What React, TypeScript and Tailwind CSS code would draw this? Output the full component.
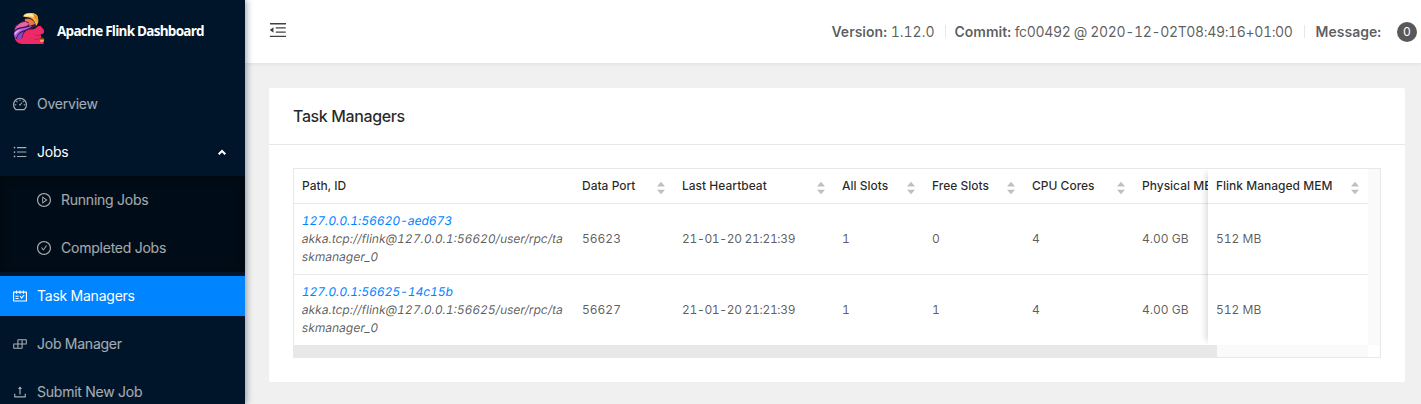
import type { ReactNode } from "react";
import type { IconType } from "react-icons";
import {
  AiOutlineBars,
  AiOutlineBuild,
  AiOutlineCheckCircle,
  AiOutlineDashboard,
  AiOutlineMenuFold,
  AiOutlinePlayCircle,
  AiOutlineSchedule,
  AiOutlineUpload,
} from "react-icons/ai";

const ICON_BOX = "64 64 896 896";

function Squirrel() {
  return (
    <svg viewBox="0 0 32 34" className="h-[34px] w-8 shrink-0">
      {/* tail */}
      <path d="M1 20C0 16 2 12 7 11L12 7C15 6 20 7 23 9L24 14L14 20L6 29C3 27 1 24 1 20Z" fill="#3b1747" />
      <path d="M10 4.500C11 1.500 15 .500 18 1C22 .500 25 3 25 6C26 9 25 12 23 14C22.500 10 20 6.500 16 5.500C14 5 12 5 10 4.500Z" fill="#f6b13c" />
      <path d="M10.500 4C12 1.500 16 1 19 2C20.500 2.500 21 4 20.500 5.500C17 3.500 14 5.500 10.500 4Z" fill="#fbe9a0" />
      <path d="M21 2.500C24.500 4 25.500 8 24.500 10.500C24 8 22.500 6 21 5Z" fill="#ef8a25" />
      <path d="M12 7C17 6 21 8 22 12C20 13 18 13 16 14C17 11 15 9 12 9.500Z" fill="#f0743f" />
      <path d="M5 13C8 9.500 13 9 16 11.500C15.500 14 12 14.500 9.500 15C7 15 3.500 16 2 18C2 16 3 14 5 13Z" fill="#ea62a6" />
      <path d="M.800 22C2 17.500 7 16.500 11 16C14 15.500 17 14.500 19.500 13.500C17 16.500 12.500 17.500 9 19C6 20.500 4 22.500 3 26C1.500 25 .800 23.500 .800 22Z" fill="#b05be0" />
      <path d="M1.500 21C3 18.500 6.500 17.500 9 17.500C6.500 18.500 4 20 2.200 23Z" fill="#d7b4f5" />
      <path d="M4 26.500C4.500 22.500 8 20.500 11 19.500C9.500 21.500 9 24 8.500 27C7 28 5 28 4 26.500Z" fill="#8a45cf" />
      {/* body */}
      <path
        d="M1.500 25C4 28 8 28 9.500 25.500C10 21 13 18 17 17.500C20 17.500 22 17 23.500 15.500C24.500 14.500 25.500 14 26 14L28 14L28.700 15.500C30.500 16.500 31.500 18.500 31 20.500C30 22 28.500 22 27.500 22.500C28.500 24 28 26 27.500 28C28 30 31 29.500 31 31.500C30.500 32 29 32 27 32L9.500 32C5 32 2 29 1.500 25Z"
        fill="#ee2a66"
      />
      <path d="M21.500 22.500C24 24 26 23.500 28 22.500M21 27C23.500 28 25 27.500 26.500 26.500" fill="none" stroke="#b3174f" strokeWidth="0.7" />
      {/* acorn */}
      <circle cx="29" cy="28" r="2.200" fill="#f4a440" />
      <path d="M26.500 27.500C27 24.800 31 24.800 31.400 27.500Z" fill="#7d3a1e" />
    </svg>
  );
}

function MenuItem({
  icon: Icon,
  label,
  sub,
  tone = "text-white/65",
  iconTone = "",
  children,
}: {
  icon: IconType;
  label: string;
  sub?: boolean;
  tone?: string;
  iconTone?: string;
  children?: ReactNode;
}) {
  return (
    <div className={`flex h-10 shrink-0 items-center gap-[10px] text-sm ${sub ? "pl-[37px]" : "pl-[13px]"} ${tone}`}>
      <Icon viewBox={ICON_BOX} className={`size-[14px] ${iconTone}`} />
      <span className="tracking-[-0.23px]">{label}</span>
      {children}
    </div>
  );
}

function Sorter() {
  return (
    <svg viewBox="0 0 8 14" className="mt-1 h-[14px] w-2 shrink-0 fill-[#bfbfbf]">
      <path d="M4 .800L8 5.500H0Z" />
      <path d="M4 13.200L0 8.700H8Z" />
    </svg>
  );
}

function Head({ label, sortable = true }: { label: string; sortable?: boolean }) {
  return (
    <div className="flex items-center justify-between overflow-hidden pr-[9px] pl-2 font-medium whitespace-nowrap text-black/85">
      <span>{label}</span>
      {sortable && <Sorter />}
    </div>
  );
}

const columns = "grid grid-cols-[280px_100px_160px_90px_100px_110px_74px]";

const rows = [
  { id: "127.0.0.1:56620-aed673", path: ["akka.tcp://flink@127.0.0.1:56620/user/rpc/ta", "skmanager_0"], port: "56623", free: "0" },
  { id: "127.0.0.1:56625-14c15b", path: ["akka.tcp://flink@127.0.0.1:56625/user/rpc/ta", "skmanager_0"], port: "56627", free: "1" },
];

export default function App() {
  return (
    <div className="flex h-[404px] w-full overflow-hidden bg-[#f0f0f0] font-['Inter',sans-serif] tabular-nums">
      <aside className="relative z-20 flex w-[245px] shrink-0 flex-col bg-[#001529] shadow-[2px_0_6px_rgba(0,21,41,0.35)]">
        <div className="flex h-16 shrink-0 items-center gap-3 pl-[13px]">
          <div className="-mt-[6px]">
            <Squirrel />
          </div>
          <h1 className="-mt-0.5 font-['Open_Sans',sans-serif] text-[13.5px] font-bold tracking-[-0.74px] whitespace-nowrap text-white">
            Apache Flink Dashboard
          </h1>
        </div>
        <nav className="flex flex-col pt-5">
          <MenuItem icon={AiOutlineDashboard} label="Overview" />
          <div className="h-2" />
          <MenuItem icon={AiOutlineBars} iconTone="text-white/65" label="Jobs" tone="text-white">
            <svg viewBox="0 0 10 7" className="mr-[18px] ml-auto h-[7px] w-[10px]">
              <path d="M1.700 5.300L5 2L8.300 5.300" fill="none" stroke="white" strokeWidth="2" />
            </svg>
          </MenuItem>
          <div className="mt-1 mb-1 flex flex-col gap-2 bg-[#000c17] py-1 shadow-[inset_0_2px_8px_rgba(0,0,0,0.45)]">
            <MenuItem sub icon={AiOutlinePlayCircle} label="Running Jobs" />
            <MenuItem sub icon={AiOutlineCheckCircle} label="Completed Jobs" />
          </div>
          <div className="flex flex-col gap-2">
            <MenuItem icon={AiOutlineSchedule} label="Task Managers" tone="bg-[#0084ff] text-white" />
            <MenuItem icon={AiOutlineBuild} label="Job Manager" />
            <MenuItem icon={AiOutlineUpload} label="Submit New Job" />
          </div>
        </nav>
      </aside>

      <main className="flex min-w-0 flex-1 flex-col">
        <header className="flex h-[63px] shrink-0 items-center bg-white pr-1 pl-6 text-sm whitespace-nowrap text-black/65 shadow-[0_1px_4px_rgba(0,21,41,0.08)]">
          <AiOutlineMenuFold viewBox={ICON_BOX} className="-mt-[3px] size-[18px] text-black/75" />
          <div className="ml-auto flex items-center">
            <span>
              <strong className="font-semibold">Version:</strong> 1.12.0
            </span>
            <i className="mr-2 ml-[11px] h-[13px] w-px bg-[#e8e8e8]" />
            <span>
              <strong className="font-semibold">Commit:</strong>{" "}
              <span className="tracking-[-0.35px]">fc00492 @ 2020-12-02T08:49:16+01:00</span>
            </span>
            <i className="mx-[11px] h-[13px] w-px bg-[#e8e8e8]" />
            <strong className="font-semibold">Message:</strong>
            <span className="ml-4 flex size-5 items-center justify-center rounded-full bg-[#595959] text-xs text-white">0</span>
          </div>
        </header>

        <section className="mt-[25px] ml-6 h-[294px] w-[1136px] rounded-xs bg-white">
          <h2 className="flex h-[57px] items-center border-b border-[#e8e8e8] px-6 text-base font-medium tracking-[-0.38px] text-black/85">
            Task Managers
          </h2>
          <div className="mt-[23px] ml-6 w-[1088px] border border-[#e8e8e8] text-xs text-black/65">
            <div className="flex h-[176px] overflow-hidden">
              <div className="w-[914px] overflow-hidden">
                <div className={`${columns} h-[35px] border-b border-[#e8e8e8]`}>
                  <Head label="Path, ID" sortable={false} />
                  <Head label="Data Port" />
                  <Head label="Last Heartbeat" />
                  <Head label="All Slots" />
                  <Head label="Free Slots" />
                  <Head label="CPU Cores" />
                  <Head label="Physical MEM" sortable={false} />
                </div>
                {rows.map((r) => (
                  <div
                    key={r.id}
                    className={`${columns} h-[71px] items-center border-b border-[#e8e8e8] *:px-2 last:h-[70px] last:border-b-0`}
                  >
                    <div className="leading-[18px] whitespace-nowrap">
                      <a className="block -skew-x-[10deg] tracking-[-0.02px] text-[#0084ff]">{r.id}</a>
                      <span className="block -skew-x-[10deg]">{r.path[0]}</span>
                      <span className="block -skew-x-[10deg]">{r.path[1]}</span>
                    </div>
                    <div>{r.port}</div>
                    <div className="tracking-[-0.32px]">21-01-20 21:21:39</div>
                    <div>1</div>
                    <div>{r.free}</div>
                    <div>4</div>
                    <div className="whitespace-nowrap">4.00 GB</div>
                  </div>
                ))}
              </div>
              <div className="w-40 shadow-[-6px_0_6px_-4px_rgba(0,0,0,0.15)]">
                <div className="grid h-[35px] border-b border-[#e8e8e8] bg-white">
                  <Head label="Flink Managed MEM" />
                </div>
                {rows.map((r) => (
                  <div
                    key={r.id}
                    className="flex h-[71px] items-center border-b border-[#e8e8e8] bg-white px-2 last:h-[70px] last:border-b-0"
                  >
                    512 MB
                  </div>
                ))}
              </div>
              <div className="w-3 bg-[#fafafa]" />
            </div>
            <div className="mr-3 h-3 bg-[#fafafa]">
              <div className="h-[13px] w-[923px] bg-[#e8e8e8]" />
            </div>
          </div>
        </section>
      </main>
    </div>
  );
}
